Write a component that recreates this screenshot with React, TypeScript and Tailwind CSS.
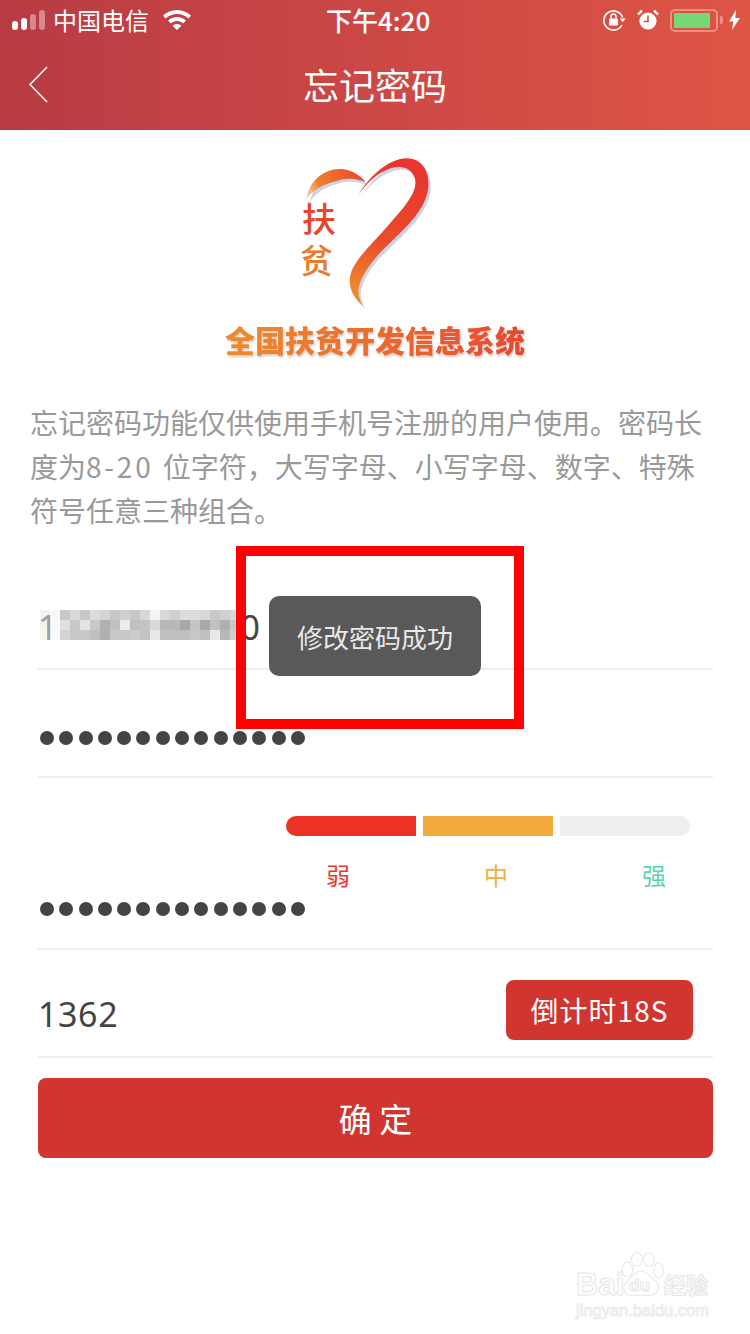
const CJK = 'font-["Noto_Sans_CJK_SC","Noto_Sans",sans-serif]'

const mosaic = [
  ['#e8e8e8', '#f0f0f0', '#c8c8c8', '#d8d8d8', '#c8c8c8', '#dcdcdc', '#d4d4d4', '#c8c8c8', '#d0d0d0', '#c8c8c8', '#d8d8d8', '#f4f4f4', '#d8d8d8', '#d0d0d0', '#dcdcdc', '#dcdcdc', '#d8d8d8', '#c8c8c8', '#d0d0d0', '#d8d8d8'],
  ['#e8e8e8', '#f4f4f4', '#e0e0e0', '#c8c8c8', '#e4e4e4', '#c8c8c8', '#b0b0b0', '#c0c0c0', '#ececec', '#c0c0c0', '#c4c4c4', '#d8d8d8', '#b8b8b8', '#b8b8b8', '#a8a8a8', '#c4c4c4', '#a8a8a8', '#c0c0c0', '#b0b0b0', '#c8c8c8'],
  ['#ededed', '#f4f4f4', '#d4d4d4', '#c8c8c8', '#c8c8c8', '#c0c0c0', '#b0b0b0', '#c8c8c8', '#c8c8c8', '#cccccc', '#c4c4c4', '#e8e8e8', '#c0c0c0', '#c0c0c0', '#c0c0c0', '#c8c8c8', '#c0c0c0', '#e8e8e8', '#b8b8b8', '#d0d0d0'],
]

function SignalBars() {
  return (
    <div className="flex items-end gap-[3px] h-[20px]">
      <div className="w-[6px] h-[9px] rounded-[3px] bg-white" />
      <div className="w-[6px] h-[12px] rounded-[3px] bg-white" />
      <div className="w-[6px] h-[16px] rounded-[3px] bg-white/40" />
      <div className="w-[6px] h-[20px] rounded-[3px] bg-white/40" />
    </div>
  )
}

function Wifi() {
  return (
    <svg width="28" height="20" viewBox="0 0 28 20" fill="white">
      <path d="M14 0C8.6 0 3.8 2.1 0 5.5l2.6 3C5.6 5.7 9.6 4 14 4s8.4 1.7 11.4 4.5l2.6-3C24.2 2.1 19.4 0 14 0z" />
      <path d="M14 7c-3.4 0-6.5 1.3-8.9 3.5l2.7 3C9.4 12 11.6 11 14 11s4.6 1 6.2 2.5l2.7-3C20.5 8.3 17.4 7 14 7z" />
      <path d="M14 14c-1.7 0-3.2.6-4.4 1.7L14 20l4.4-4.3C17.2 14.6 15.7 14 14 14z" />
    </svg>
  )
}

function RotationLock() {
  return (
    <svg width="24" height="24" viewBox="0 0 24 24" fill="none">
      <path d="M20.6 9.5A9.6 9.6 0 1 0 20 17" stroke="white" strokeWidth="1.6" />
      <path d="M17.6 10.5h6.2l-3.1 3.6z" fill="white" />
      <rect x="7" y="10.5" width="9" height="7" rx="1" fill="white" />
      <path d="M9 10.5V8.6a2.5 2.5 0 0 1 5 0v1.9" stroke="white" strokeWidth="1.5" />
    </svg>
  )
}

function Alarm() {
  return (
    <svg width="22" height="22" viewBox="0 0 22 22" fill="none">
      <circle cx="11" cy="12" r="8.6" fill="white" />
      <path d="M11 6.5V12.5H6.8" stroke="#d65045" strokeWidth="1.6" />
      <path d="M1 5.5L5 1.6M21 5.5L17 1.6" stroke="white" strokeWidth="2.2" />
    </svg>
  )
}

function Battery() {
  return (
    <div className="flex items-center gap-[2px]">
      <div className="w-[48px] h-[23px] rounded-[5px] border-2 border-[#ee8e84] p-[2px] pr-[6px]">
        <div className="h-full rounded-[1px] bg-[#76d873]" />
      </div>
      <div className="w-[3px] h-[8px] rounded-r-[2px] bg-[#ee8e84]" />
    </div>
  )
}

function Bolt() {
  return (
    <svg width="11" height="20" viewBox="0 0 11 20" fill="white">
      <path d="M7 0L0 11.5h4.2L3 20l8-12H6.4z" />
    </svg>
  )
}

function Header() {
  return (
    <header className="h-[130px] bg-gradient-to-r from-[#b83b43] via-[#cc4845] to-[#de5544] text-white">
      <div className="h-[40px] flex items-center pl-[12px] pr-[10px]">
        <SignalBars />
        <span className="ml-[8px] text-[24px] leading-none">中国电信</span>
        <div className="ml-[14px]"><Wifi /></div>
        <span className="ml-[135px] text-[26px] leading-none font-medium">下午4:20</span>
        <div className="ml-auto flex items-center">
          <RotationLock />
          <div className="ml-[11px]"><Alarm /></div>
          <div className="ml-[11px]"><Battery /></div>
          <div className="ml-[6px]"><Bolt /></div>
        </div>
      </div>
      <div className="h-[90px] grid grid-cols-[1fr_auto_1fr] items-center">
        <svg className="ml-[28px] mb-[1px]" width="20" height="37" viewBox="0 0 20 37" fill="none">
          <path d="M19 1L2 18.5 19 36" stroke="white" strokeWidth="1.5" />
        </svg>
        <h1 className="text-[36px] leading-none font-normal mb-[2px]">忘记密码</h1>
      </div>
    </header>
  )
}

function Logo() {
  return (
    <div className="flex flex-col items-center pt-[15px]">
      <div className="relative w-[330px] h-[163px]">
        <svg width="330" height="163" viewBox="0 0 990 490">
          <defs>
            <linearGradient id="heartMain" gradientUnits="userSpaceOnUse" x1="600" y1="60" x2="430" y2="470">
              <stop offset="0" stopColor="#e9342f" />
              <stop offset="0.55" stopColor="#ea4d2c" />
              <stop offset="1" stopColor="#f0912c" />
            </linearGradient>
            <linearGradient id="heartLeft" gradientUnits="userSpaceOnUse" x1="460" y1="90" x2="285" y2="165">
              <stop offset="0" stopColor="#e9472d" />
              <stop offset="0.7" stopColor="#f0802c" />
              <stop offset="1" stopColor="#fbe3cf" />
            </linearGradient>
          </defs>
          <g fill="#cdd3e6">
            <path d="M300 170C310 120 350 85 400 85C430 88 455 100 474 122C445 110 415 106 385 116C345 126 318 145 300 170Z" />
            <path d="M452 158C487 98 547 48 597 48C647 48 667 93 662 138C652 218 567 278 507 343C477 378 452 418 452 448C452 463 457 478 465 492C437 468 422 438 427 403C437 353 497 303 547 243C592 193 632 148 622 108C612 78 587 70 557 76C527 83 487 108 452 158Z" />
          </g>
          <path fill="url(#heartLeft)" d="M288 165C295 110 340 70 395 72C425 75 450 90 468 112C440 100 410 98 380 108C340 118 305 135 288 165Z" />
          <path fill="url(#heartMain)" d="M445 150C480 90 540 40 590 40C640 40 660 85 655 130C645 210 560 270 500 335C470 370 445 410 445 440C445 455 450 470 458 482C430 460 415 430 420 395C430 345 490 295 540 235C585 185 625 140 615 100C605 70 580 62 550 68C520 75 480 100 445 150Z" />
        </svg>
        <span className={`absolute left-[92px] top-[56px] text-[34px] leading-none font-medium text-[#e8452c] ${CJK}`}>扶</span>
        <span className={`absolute left-[90px] top-[98px] text-[33px] leading-none font-medium text-[#ec7a2a] ${CJK}`}>贫</span>
      </div>
      <div className={`mt-[13px] text-[30px] leading-[36px] font-black whitespace-nowrap bg-gradient-to-r from-[#f08a2c] to-[#e9452f] bg-clip-text text-transparent [filter:drop-shadow(1px_2px_1px_#d9c8c0)] ${CJK}`}>
        全国扶贫开发信息系统
      </div>
    </div>
  )
}

function Dots() {
  return (
    <div className="flex gap-[5.3px] pl-[2px]">
      {Array.from({ length: 14 }).map((_, i) => (
        <div key={i} className="w-[14px] h-[14px] rounded-full bg-[#444444]" />
      ))}
    </div>
  )
}

function Strength() {
  return (
    <div>
      <div className="ml-[248px] flex gap-[7px]">
        <div className="w-[130px] h-[20px] rounded-l-[10px] bg-[#ec3323]" />
        <div className="w-[130px] h-[20px] bg-[#f2aa3b]" />
        <div className="w-[130px] h-[20px] rounded-r-[10px] bg-[#eeeeee]" />
      </div>
      <div className="ml-[221px] mt-[23px] flex text-[24px] leading-[32px]">
        <span className="w-[158px] shrink-0 text-center text-[#e8392f]">弱</span>
        <span className="w-[158px] shrink-0 text-center text-[#f5ae3e]">中</span>
        <span className="w-[158px] shrink-0 text-center text-[#5fd2b3]">强</span>
      </div>
    </div>
  )
}

function Form() {
  return (
    <div className="mt-[30px] pl-[38px] pr-[37px]">
      <div className="h-[108px] border-b-2 border-[#eeeeee] flex items-end pb-[21px]">
        <div className="relative w-[222px] flex justify-between font-['Noto_Sans',sans-serif] text-[34px] leading-[40px] text-[#444444]">
          <span>1</span>
          <span>0</span>
          <div className="absolute left-[2px] top-[3px] w-[200px]">
            {mosaic.map((row, r) => (
              <div key={r} className="flex">
                {row.map((c, i) => (
                  <div key={i} className="w-[10px] h-[10px]" style={{ backgroundColor: c, opacity: i < 2 ? 0.55 : 1 }} />
                ))}
              </div>
            ))}
          </div>
        </div>
      </div>
      <div className="h-[108px] border-b-2 border-[#eeeeee] flex items-end pb-[31px]">
        <Dots />
      </div>
      <div className="h-[172px] border-b-2 border-[#eeeeee] pt-[38px]">
        <Strength />
        <div className="mt-[11px]"><Dots /></div>
      </div>
      <div className="h-[108px] border-b-2 border-[#eeeeee] flex items-center justify-between pr-[20px]">
        <span className="mt-[22px] font-['Noto_Sans',sans-serif] text-[34px] leading-[40px] tracking-[0.6px] text-[#444444]">1362</span>
        <button className="mt-[14px] w-[187px] h-[60px] rounded-[8px] bg-[#d1352f] text-white text-[28px] tracking-[1px] leading-none">倒计时18S</button>
      </div>
      <button className="mt-[20px] w-full h-[80px] rounded-[8px] bg-[#d1352f] text-white text-[33px] leading-none">确 定</button>
    </div>
  )
}

function Watermark() {
  return (
    <div className="absolute left-[576px] top-[1252px] w-[140px] h-[68px] text-transparent font-['Liberation_Sans',sans-serif]">
      <svg className="absolute left-[42px] top-0" width="46" height="46" viewBox="0 0 68 68" fill="white" stroke="#e8e8e8" strokeWidth="1.6">
        <ellipse cx="14" cy="26" rx="8" ry="11" />
        <ellipse cx="28" cy="11" rx="8" ry="10" />
        <ellipse cx="46" cy="11" rx="8" ry="10" />
        <ellipse cx="60" cy="27" rx="7" ry="11" />
        <path d="M34 28c9 0 14 9 22 16 7 7 4 20-9 20H20C8 64 5 51 13 44c8-6 11-16 21-16z" />
      </svg>
      <span className="absolute left-0 top-[17px] text-[31px] leading-none font-bold [-webkit-text-stroke:1px_#e6e6e6]">Bai</span>
      <span className="absolute left-[53px] top-[25px] text-[17px] leading-none font-bold [-webkit-text-stroke:1px_#e6e6e6]">du</span>
      <span className={`absolute left-[88px] top-[20px] text-[22px] leading-none font-bold [-webkit-text-stroke:1px_#e6e6e6] ${CJK}`}>经验</span>
      <span className="absolute left-0 top-[50px] text-[16.5px] leading-none whitespace-nowrap [-webkit-text-stroke:1px_#ebebeb]">jingyan.baidu.com</span>
    </div>
  )
}

export default function App() {
  return (
    <div lang="zh-CN" className={`relative w-[750px] h-[1334px] overflow-hidden bg-white ${CJK}`}>
      <Header />
      <Logo />
      <p className="mt-[43px] pl-[30px] pr-[32px] text-[28px] leading-[44px] text-[#999999]">
        忘记密码功能仅供使用手机号注册的用户使用。密码长度为<span className="tracking-[2.8px]">8-20 </span>{'位字符\uFF0C大写字母、小写字母、数字、特殊符号任意三种组合。'}
      </p>
      <Form />

      {/* toast and the red annotation frame sit on top of the form */}
      <div className="absolute left-[269px] top-[596px] w-[212px] h-[80px] rounded-[10px] bg-[#595959] text-[#e8e8e8] text-[26px] flex items-center justify-center">
        修改密码成功
      </div>
      <div className="absolute left-[236px] top-[546px] w-[288px] h-[183px] border-[10px] border-[#ff0000]" />
      <Watermark />
    </div>
  )
}
